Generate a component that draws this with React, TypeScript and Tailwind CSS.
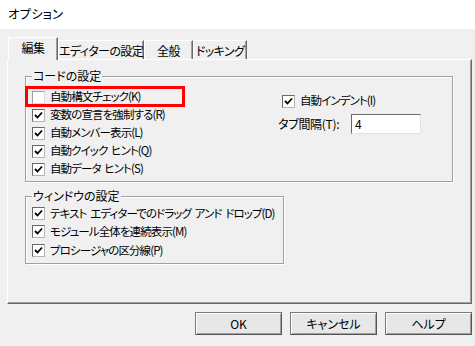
import React from "react"

const FONT = { fontFamily: '"Noto Sans CJK JP", "Noto Sans", sans-serif' }

function Check({ checked }: { checked: boolean }) {
  return (
    <span
      className={`flex h-[13px] w-[13px] shrink-0 items-center justify-center bg-white border ${
        checked ? "border-t-[#696969] border-l-[#696969] border-r-[#b5b5b5] border-b-[#b5b5b5]" : "border-t-[#a0a0a0] border-l-[#a0a0a0] border-r-[#dcdcdc] border-b-[#dcdcdc]"
      }`}
    >
      {checked && (
        <svg width="9" height="9" viewBox="0 0 9 9">
          <path d="M1 4 L3.5 6.5 L8 1.5" fill="none" stroke="#000" strokeWidth="1.8" />
        </svg>
      )}
    </span>
  )
}

function Row({ label, checked = true, h = "h-[18px]" }: { label: string; checked?: boolean; h?: string }) {
  return (
    <div className={`flex items-center gap-[5px] ${h}`}>
      <Check checked={checked} />
      <span className="text-[11.5px] leading-none tracking-[-0.9px] [word-spacing:2px] text-black whitespace-pre">{label}</span>
    </div>
  )
}

function Group({ title, className, children }: { title: string; className: string; children: React.ReactNode }) {
  return (
    <div className={`relative border border-[#a0a0a0] shadow-[1px_1px_0_#ffffff,inset_1px_1px_0_#ffffff] ${className}`}>
      <span className="absolute left-[6px] top-[-8px] bg-[#f0f0f0] px-[1px] text-[12px] leading-[14px] text-black whitespace-nowrap">
        {title}
      </span>
      {children}
    </div>
  )
}

function Tab({ label, w, active = false }: { label: string; w: string; active?: boolean }) {
  return (
    <div
      className={`flex items-center justify-center whitespace-nowrap ${w} border-t border-l border-t-white border-l-white border-r border-r-[#696969] shadow-[inset_-1px_0_0_#a0a0a0] bg-[#f0f0f0] text-[12px] leading-none tracking-[-0.6px] text-black ${
        active ? "relative z-10 h-[23px] mb-[-1px] pb-[2px]" : "h-[19px] pt-[1px]"
      }`}
    >
      {label}
    </div>
  )
}

function Button({ label }: { label: string }) {
  return (
    <button className="flex h-[23px] w-[87px] items-center justify-center border border-[#7a7a7a] border-r-[#555] border-b-[#555] bg-[#e7e7e7] shadow-[inset_1px_1px_0_#ffffff,inset_-1px_-1px_0_#a0a0a0] text-[12px] leading-none text-black">
      {label}
    </button>
  )
}

export default function App() {
  return (
    <div
      className="relative flex h-[346px] w-[475px] flex-col overflow-hidden bg-[#f0f0f0] [font-feature-settings:'palt']"
      style={FONT}
    >
      <div className="flex h-[29px] items-center bg-white pl-[8px] text-[12.5px] text-black">オプション</div>

      <div className="mt-[8px] flex items-end pl-[8px]">
        <Tab label="編集" w="w-[50px]" active />
        <Tab label="エディターの設定" w="w-[86px]" />
        <Tab label="全般" w="w-[49px]" />
        <Tab label="ドッキング" w="w-[54px]" />
      </div>

      <div className="ml-[7px] h-[245px] w-[465px] border border-t-white border-l-white border-r-[#696969] border-b-[#696969] shadow-[inset_-1px_-1px_0_#a0a0a0] pl-[17px]">
        <Group title="コードの設定" className="mt-[16px] h-[106px] w-[428px]">
          <div className="flex pt-[11px] pl-[6px]">
            <div className="w-[246px]">
              <Row label="自動構文チェック(K)" checked={false} />
              <Row label="変数の宣言を強制する(R)" />
              <Row label="自動メンバー表示(L)" />
              <Row label="自動クイック ヒント(Q)" />
              <Row label="自動データ ヒント(S)" />
            </div>
            <div className="flex flex-col gap-[4px] pt-[4px]">
              <div className="pl-[4px]">
                <Row label="自動インデント(I)" />
              </div>
              <div className="flex h-[20px] items-center">
                <span className="w-[73px] text-[12px] leading-none tracking-[-0.3px] text-black whitespace-nowrap">タブ間隔(T):</span>
                <div className="flex h-[20px] w-[70px] items-center border border-t-[#696969] border-l-[#696969] border-r-[#e3e3e3] border-b-[#e3e3e3] bg-white pl-[3px] text-[12px] leading-none text-black">
                  4
                </div>
              </div>
            </div>
          </div>
        </Group>

        <Group title="ウィンドウの設定" className="mt-[14px] h-[68px] w-[259px]">
          <div className="pt-[7px] pl-[6px]">
            <Row label="テキスト エディターでのドラッグ アンド ドロップ(D)" h="h-[18.5px]" />
            <Row label="モジュール全体を連続表示(M)" h="h-[18.5px]" />
            <Row label="プロシージャの区分線(P)" h="h-[18.5px]" />
          </div>
        </Group>
      </div>

      <div className="mt-[8px] flex justify-end gap-[8px] pr-[3px]">
        <Button label="OK" />
        <Button label="キャンセル" />
        <Button label="ヘルプ" />
      </div>

      {/* red highlight annotation */}
      <div className="pointer-events-none absolute left-[25px] top-[86px] h-[21px] w-[160px] border-[3px] border-[#ff0000]" />
    </div>
  )
}
